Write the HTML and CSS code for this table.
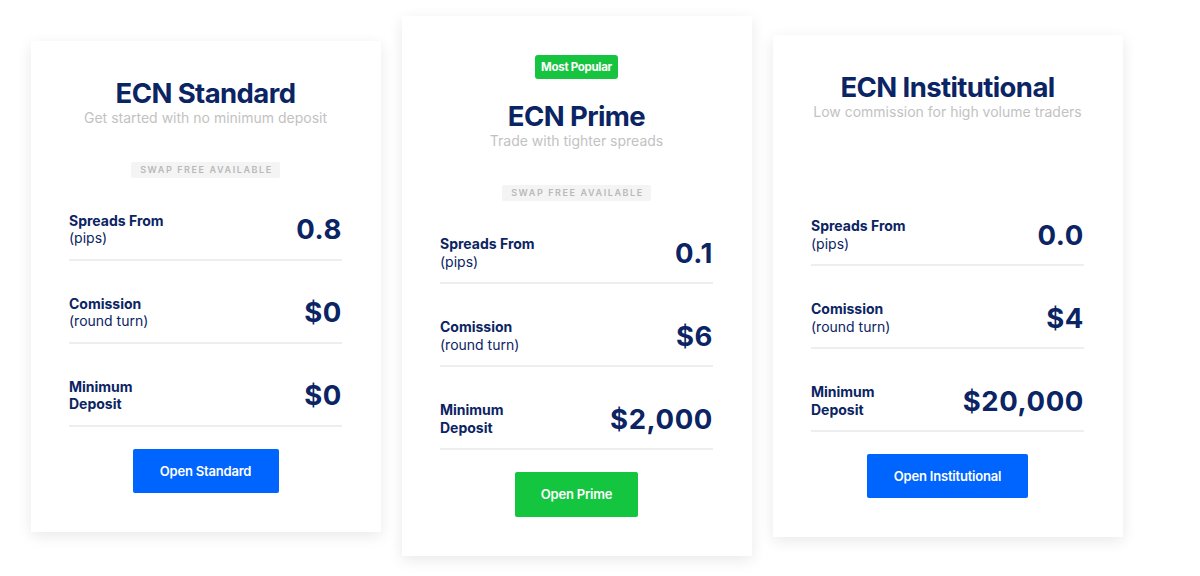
FILE: index.html
```html
<!DOCTYPE html>
<html lang="en">
<head>
<meta charset="utf-8">
<title>ECN Accounts</title>
<link rel="stylesheet" href="styles.css">
</head>
<body>
<div class="plans">
  <div class="card">
    <h2 class="title">ECN Standard</h2>
    <p class="sub">Get started with no minimum deposit</p>
    <div class="swap-wrap"><span class="swap">SWAP FREE AVAILABLE</span></div>
    <div class="row"><div class="label"><b>Spreads From</b><br>(pips)</div><div class="value">0.8</div></div>
    <div class="row"><div class="label"><b>Comission</b><br>(round turn)</div><div class="value">$0</div></div>
    <div class="row"><div class="label"><b>Minimum<br>Deposit</b></div><div class="value">$0</div></div>
    <div class="btn-wrap"><a class="btn blue btn-std">Open Standard</a></div>
  </div>
  <div class="card">
    <div class="popular-wrap"><span class="popular">Most Popular</span></div>
    <h2 class="title">ECN Prime</h2>
    <p class="sub">Trade with tighter spreads</p>
    <div class="swap-wrap"><span class="swap">SWAP FREE AVAILABLE</span></div>
    <div class="row"><div class="label"><b>Spreads From</b><br>(pips)</div><div class="value">0.1</div></div>
    <div class="row"><div class="label"><b>Comission</b><br>(round turn)</div><div class="value">$6</div></div>
    <div class="row"><div class="label"><b>Minimum<br>Deposit</b></div><div class="value">$2,000</div></div>
    <div class="btn-wrap"><a class="btn green btn-prime">Open Prime</a></div>
  </div>
  <div class="card">
    <h2 class="title">ECN Institutional</h2>
    <p class="sub">Low commission for high volume traders</p>
    <div class="spacer"></div>
    <div class="row"><div class="label"><b>Spreads From</b><br>(pips)</div><div class="value">0.0</div></div>
    <div class="row"><div class="label"><b>Comission</b><br>(round turn)</div><div class="value">$4</div></div>
    <div class="row"><div class="label"><b>Minimum<br>Deposit</b></div><div class="value">$20,000</div></div>
    <div class="btn-wrap"><a class="btn blue btn-inst">Open Institutional</a></div>
  </div>
</div>
</body>
</html>
```
FILE: styles.css
```css
* { box-sizing: border-box; }
html, body { margin: 0; padding: 0; background: #fff; }
body { font-family: Inter, "Noto Sans", sans-serif; color: #0b2463; }

.plans {
  display: flex;
  align-items: center;
  gap: 21px;
  padding-left: 31px;
  height: 572px;
}

.card {
  width: 350px;
  background: #fff;
  padding: 36px 39px 39px 38px;
  box-shadow: 0 4px 14px rgba(0, 0, 0, 0.09);
}

.title {
  margin: 0;
  font-size: 27.5px;
  line-height: 32px;
  font-weight: 700;
  letter-spacing: -0.6px;
  text-align: center;
  color: #0b2463;
}

.sub {
  margin: 0;
  font-size: 14px;
  line-height: 18px;
  text-align: center;
  color: #c2c2c2;
}

.swap-wrap { margin-top: 35px; display: flex; justify-content: center; height: 16px; }
.swap {
  display: block;
  background: #f4f4f4;
  color: #b9b9b9;
  font-size: 9px;
  font-weight: 600;
  letter-spacing: 1.6px;
  line-height: 16px;
  height: 16px;
  padding: 0 7px 0 9px;
  border-radius: 2px;
}
.spacer { margin-top: 35px; height: 27px; }

.popular-wrap { display: flex; justify-content: center; margin: 3px 0 21px; }
.popular {
  display: block;
  background: #16c440;
  color: #fff;
  font-size: 11.5px;
  font-weight: 700;
  line-height: 24px;
  height: 24px;
  padding: 0 6px;
  border-radius: 3px;
  letter-spacing: -0.3px;
}

.row {
  display: flex;
  align-items: center;
  justify-content: space-between;
  padding: 34px 0 12px;
  border-bottom: 2px solid #eeeeee;
}
.label {
  font-size: 14px;
  line-height: 17.5px;
  color: #0b2463;
}
.label b { font-weight: 700; }
.value {
  font-size: 27.5px;
  font-weight: 700;
  letter-spacing: 0.6px;
  line-height: 32px;
  color: #0b2463;
}

.btn-wrap { margin-top: 22px; display: flex; justify-content: center; }
.btn {
  display: block;
  text-align: center;
  height: 44px;
  line-height: 44px;
  color: #fff;
  font-size: 13px;
  font-weight: 600;
  border-radius: 2px;
  letter-spacing: -0.2px;
}
.blue { background: #0064ff; }
.green { background: #14c63f; height: 45px; line-height: 45px; }
.btn-std { width: 146px; }
.btn-prime { width: 123px; }
.btn-inst { width: 161px; }
```
